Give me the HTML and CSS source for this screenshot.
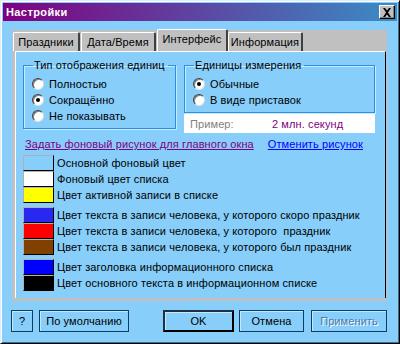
FILE: index.html
```html
<!DOCTYPE html>
<html lang="ru">
<head>
    <meta charset="UTF-8">
    <title>Настройки</title>
    <link rel="stylesheet" href="styles.css">
</head>
<body>
    <div class="window">
        <div class="titlebar">
            <span class="title">Настройки</span>
            <span class="close">
                <svg width="10" height="9" viewBox="0 0 10 9"><path d="M1 0h2l2 2.5L7 0h2L6 4.5 9 9H7L5 6.5 3 9H1l3-4.5z" fill="#000"/></svg>
            </span>
        </div>

        <div class="tabctl">
            <div class="tabs">
                <div class="tab tab-holidays">Праздники</div>
                <div class="tab tab-date">Дата/Время</div>
                <div class="tab tab-ui active">Интерфейс</div>
                <div class="tab tab-info">Информация</div>
            </div>
            <div class="panel">
                <div class="top-row">
                    <fieldset class="group g1">
                        <legend>Тип отображения единиц</legend>
                        <div class="radio-row"><span class="radio"></span>Полностью</div>
                        <div class="radio-row"><span class="radio checked"></span>Сокращённо</div>
                        <div class="radio-row"><span class="radio"></span>Не показывать</div>
                    </fieldset>
                    <div class="right-col">
                        <fieldset class="group g2">
                            <legend>Единицы измерения</legend>
                            <div class="radio-row"><span class="radio checked"></span>Обычные</div>
                            <div class="radio-row"><span class="radio"></span>В виде приставок</div>
                        </fieldset>
                        <div class="example">
                            <span class="ex-label">Пример:</span>
                            <span class="ex-value">2 млн. секунд</span>
                        </div>
                    </div>
                </div>

                <div class="links">
                    <a class="link-set">Задать фоновый рисунок для главного окна</a>
                    <a class="link-cancel">Отменить рисунок</a>
                </div>

                <div class="color-group">
                    <div class="color-row"><span class="swatch sw-main"></span>Основной фоновый цвет</div>
                    <div class="color-row"><span class="swatch sw-list"></span>Фоновый цвет списка</div>
                    <div class="color-row"><span class="swatch sw-active"></span>Цвет активной записи в списке</div>
                </div>
                <div class="color-group">
                    <div class="color-row"><span class="swatch sw-soon"></span>Цвет текста в записи человека, у которого скоро праздник</div>
                    <div class="color-row"><span class="swatch sw-now"></span>Цвет текста в записи человека, у которого&nbsp; праздник</div>
                    <div class="color-row"><span class="swatch sw-past"></span>Цвет текста в записи человека, у которого был праздник</div>
                </div>
                <div class="color-group">
                    <div class="color-row"><span class="swatch sw-head"></span>Цвет заголовка информационного списка</div>
                    <div class="color-row"><span class="swatch sw-text"></span>Цвет основного текста в информационном списке</div>
                </div>
            </div>
        </div>

        <div class="buttons">
            <button class="btn btn-help">?</button>
            <button class="btn btn-default">По умолчанию</button>
            <span class="spacer"></span>
            <button class="btn btn-ok">OK</button>
            <button class="btn btn-cancel">Отмена</button>
            <button class="btn btn-apply" disabled>Применить</button>
        </div>
    </div>
</body>
</html>
```

FILE: styles.css
```css
body {
    margin: 0;
    background: #87cefa;
    font-family: 'Liberation Sans', Arial, sans-serif;
    font-size: 11px;
    letter-spacing: 0.1px;
    color: #000;
    white-space: nowrap;
}

.window {
    width: 400px;
    height: 344px;
    box-sizing: border-box;
    border: 1px solid;
    border-color: #d8f0ff #000 #000 #d8f0ff;
    box-shadow: inset 1px 1px #fff, inset -1px -1px #3a6c8c;
    padding: 2px;
    background: #87cefa;
    display: flex;
    flex-direction: column;
}

.titlebar {
    height: 18px;
    background: linear-gradient(to right, #800080, #3a8cc4);
    display: flex;
    align-items: center;
    justify-content: space-between;
    padding: 0 2px 0 3px;
}

.title {
    color: #fff;
    font-weight: bold;
    font-size: 11px;
    letter-spacing: 0.4px;
}

.close {
    width: 16px;
    height: 14px;
    box-sizing: border-box;
    background: #c0c0c0;
    border: 1px solid;
    border-color: #fff #000 #000 #fff;
    box-shadow: inset -1px -1px #808080;
    display: flex;
    align-items: center;
    justify-content: center;
}

/* вкладки */
.tabctl {
    margin: 9px 10px 0 9px;
    height: 271px;
    box-sizing: border-box;
    background: #c0c0c0;
    padding: 0 1px 3px 3px;
    display: flex;
    flex-direction: column;
}

.tabs {
    display: flex;
    height: 21px;
    margin-left: -2px;
}

.tab {
    flex: none;
    margin-top: 2px;
    height: 19px;
    box-sizing: border-box;
    padding-top: 3px;
    text-align: center;
    border-top: 1px solid #fff;
    border-left: 1px solid #fff;
    border-right: 2px solid #404040;
    border-radius: 2px 2px 0 0;
    background: #c0c0c0;
    margin-right: 1px;
}

.tab-holidays { width: 67px; }
.tab-date { width: 75px; }
.tab-ui { width: 71px; }
.tab-info { width: 75px; }

.tab.active {
    margin-top: -1px;
    margin-right: 0;
    height: 22px;
}

.panel {
    flex: 1;
    background: #87cefa;
    border-top: 1px solid #fff;
    border-left: 1px solid #fff;
    border-right: 1px solid #000;
    padding: 6px 0 0 7px;
}

.top-row {
    display: flex;
    align-items: flex-start;
}

.group {
    margin: 0;
    padding: 4px 0 0 8px;
    border: 1px solid #2e8ee0;
    box-shadow: inset 1px 1px #c8ecff, 1px 1px #c8ecff;
}

.group legend {
    padding: 0 3px 0 1px;
    margin-left: 1px;
    line-height: 14px;
}

.g1 {
    width: 153px;
    height: 71px;
    box-sizing: border-box;
}

.g2 {
    width: 191px;
    height: 55px;
    box-sizing: border-box;
}

.right-col {
    margin-left: 8px;
    display: flex;
    flex-direction: column;
}

.radio-row {
    height: 16px;
    display: flex;
    align-items: center;
}

.radio {
    width: 12px;
    height: 12px;
    box-sizing: border-box;
    border-radius: 50%;
    background: #fff;
    border: 1px solid;
    border-color: #404040 #e0e0e0 #e0e0e0 #404040;
    box-shadow: inset 1px 1px #808080;
    margin-right: 5px;
    display: flex;
    align-items: center;
    justify-content: center;
}

.radio.checked::after {
    content: "";
    width: 4px;
    height: 4px;
    border-radius: 50%;
    background: #000;
}

.example {
    margin-top: 1px;
    height: 19px;
    background: #fff;
    display: flex;
    align-items: center;
    padding-left: 6px;
}

.ex-label {
    color: #808080;
    width: 82px;
}

.ex-value {
    color: #800080;
}

.links {
    display: flex;
    gap: 14px;
    padding: 5px 0 0 2px;
    height: 17px;
}

.links a {
    text-decoration: underline;
    cursor: pointer;
}

.link-set {
    color: #800080;
}

.link-cancel {
    color: #0000ff;
}

.color-group {
    margin-bottom: 4px;
}

.color-row {
    height: 16px;
    display: flex;
    align-items: center;
}

.swatch {
    width: 31px;
    height: 16px;
    box-sizing: border-box;
    border: 1px solid;
    border-color: #b0b0b0 #000 #000 #b0b0b0;
    margin-right: 3px;
}

.sw-main { background: #87cefa; }
.sw-list { background: #fff; }
.sw-active { background: #ffff00; }
.sw-soon { background: #2828f0; }
.sw-now { background: #ff0000; }
.sw-past { background: #804000; }
.sw-head { background: #0000ff; }
.sw-text { background: #000; }

/* кнопки */
.buttons {
    display: flex;
    margin: 9px 10px 0 8px;
    gap: 6px;
}

.spacer {
    flex: 1;
}

.btn {
    height: 22px;
    box-sizing: border-box;
    background: #87cefa;
    border: 1px solid #0d3d66;
    box-shadow: inset 1px 1px #c0e8ff;
    font-family: inherit;
    font-size: 11px;
    letter-spacing: 0.1px;
    color: #000;
    padding: 0;
}

.btn-help { width: 22px; }
.btn-default { width: 90px; }
.btn-ok {
    width: 71px;
    border: 2px solid #000;
    border-top-color: #203040;
    border-left-color: #203040;
}
.btn-cancel { width: 65px; margin-left: -1px; }
.btn-apply {
    width: 76px;
    margin-left: 1px;
    color: #4a7ca8;
    text-shadow: 1px 1px #fff;
}
```
